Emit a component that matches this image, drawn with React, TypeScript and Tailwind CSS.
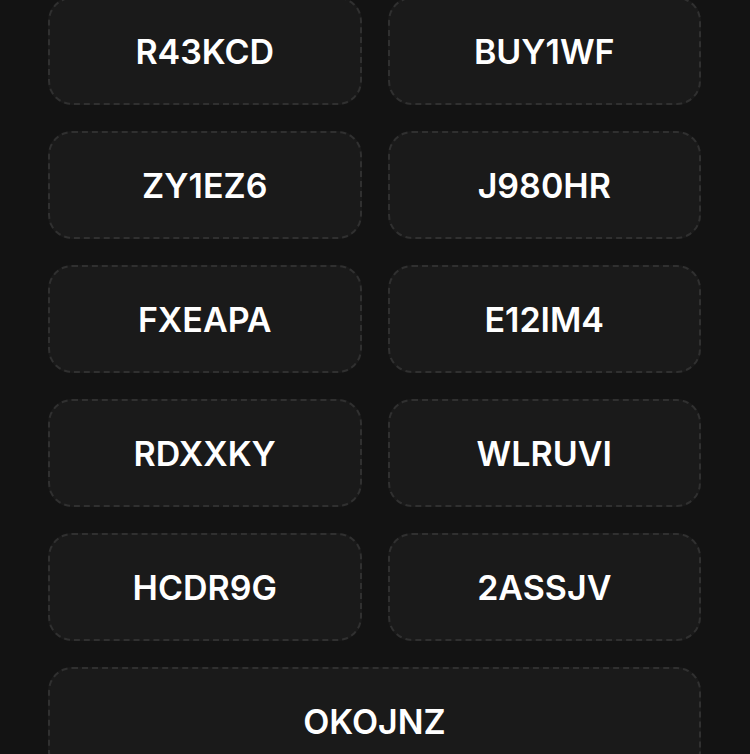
import React from "react";

const codes = ["R43KCD", "BUY1WF", "ZY1EZ6", "J980HR", "FXEAPA", "E12IM4", "RDXXKY", "WLRUVI", "HCDR9G", "2ASSJV"];

function Card({ code, full }: { code: string; full?: boolean }) {
  return (
    <div
      className={`h-[108px] rounded-[24px] border-2 border-dashed border-[#303030] bg-[#1a1a1a] flex items-center justify-center text-white text-[34px] font-semibold ${full ? "col-span-2" : ""}`}
    >
      {code}
    </div>
  );
}

export default function App() {
  return (
    <div className="w-[750px] h-[754px] overflow-hidden bg-[#131313]" style={{ fontFamily: "Inter, 'Noto Sans', sans-serif" }}>
      <div className="mt-[-3px] ml-[48px] w-[653px] grid grid-cols-2 gap-x-[26px] gap-y-[26px]">
        {codes.map((c) => (
          <Card key={c} code={c} />
        ))}
        <Card code="OKOJNZ" full />
      </div>
    </div>
  );
}
